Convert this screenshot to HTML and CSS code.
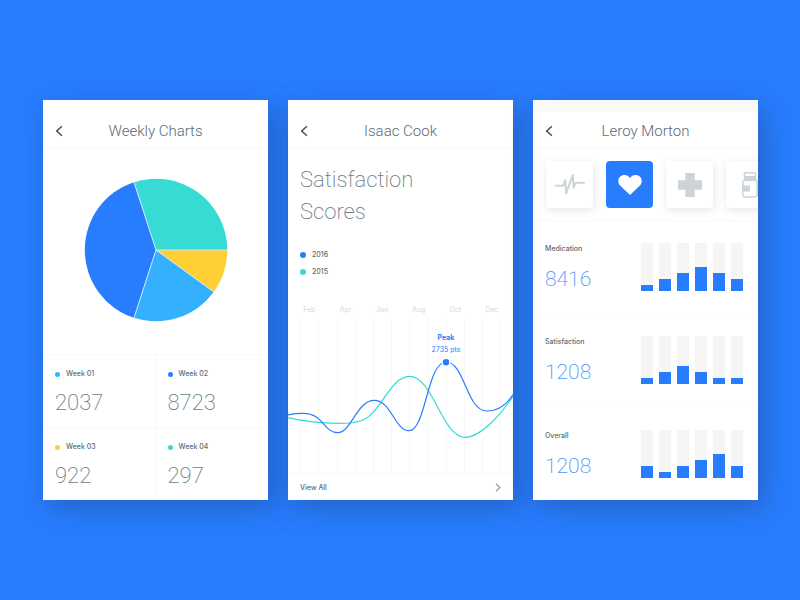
FILE: index.html
```html
<!DOCTYPE html>
<html lang="en">
<head>
<meta charset="utf-8">
<title>Health Charts</title>
<link rel="stylesheet" href="styles.css">
</head>
<body>
<main class="screens">
  <section class="card">
    <div class="status"></div>
    <header class="bar">
      <button class="back" type="button" aria-label="Back"><svg width="8" height="12" viewBox="0 0 8 12"><path d="M6.9 1.2 1.7 6l5.2 4.8"/></svg></button>
      <h1>Weekly Charts</h1>
    </header>
    <div class="pie">
      <svg viewBox="-72 -72 144 144" stroke="#d5e8f4" stroke-width="1" stroke-linejoin="round">
        <g stroke="none">
          <path fill="#38dbd4" d="M0 0-22-67.800A71.300 71.300 0 0 1 71.300 0Z"/>
          <path fill="#ffcf33" d="M0 0H71.300A71.300 71.300 0 0 1 57.700 41.900Z"/>
          <path fill="#33b1ff" d="M0 0 57.700 41.900A71.300 71.300 0 0 1-22 67.800Z"/>
          <path fill="#287dff" d="M0 0-22 67.800A71.300 71.300 0 0 1-22-67.800Z"/>
        </g>
        <path fill="none" d="M-22-67.800 0 0H71.300M57.700 41.900 0 0-22 67.800"/>
      </svg>
    </div>
    <div class="weeks">
      <div class="week"><p class="label"><i class="dot sky"></i>Week 01</p><p class="number">2037</p></div>
      <div class="week"><p class="label"><i class="dot blue"></i>Week 02</p><p class="number">8723</p></div>
      <div class="week"><p class="label"><i class="dot yellow"></i>Week 03</p><p class="number">922</p></div>
      <div class="week"><p class="label"><i class="dot teal"></i>Week 04</p><p class="number">297</p></div>
    </div>
  </section>

  <section class="card">
    <div class="status"></div>
    <header class="bar">
      <button class="back" type="button" aria-label="Back"><svg width="8" height="12" viewBox="0 0 8 12"><path d="M6.9 1.2 1.7 6l5.2 4.8"/></svg></button>
      <h1>Isaac Cook</h1>
    </header>
    <h2>Satisfaction<br>Scores</h2>
    <ul class="legend">
      <li class="label"><i class="dot blue"></i>2016</li>
      <li class="label"><i class="dot teal"></i>2015</li>
    </ul>
    <div class="months"><span>Feb</span><span>Apr</span><span>Jun</span><span>Aug</span><span>Oct</span><span>Dec</span></div>
    <svg class="chart" viewBox="0 0 225 155">
      <path class="grid" d="M12.5 0v155M30.5 0v155M49.5 0v155M67.5 0v155M85.5 0v155M103.5 0v155M121.5 0v155M140.5 0v155M158.5 0v155M176.5 0v155M194.5 0v155M212.5 0v155"/>
      <path class="line teal-line" d="M0 99.700C16 103.500 34 105.500 52 105.400C60 105.400 67 105 73 102.800C93 96 102 58.300 121.500 58.300C145 58.300 154 119.300 177 119.300C193 119.300 213 96 225 78.500"/>
      <path class="line blue-line" d="M0 96.800C5 95.600 10 95.300 15.500 95.300C35 95.300 36 114.700 49.700 114.700C63 114.700 69 82.300 86.300 82.300C103 82.300 107 112.700 121 112.700C138 112.700 139 44 158 44C177 44 178 93 199 93C209 93 218 88 225 76.500"/>
      <circle cx="158" cy="44.300" r="4.500" fill="#fff"/>
      <circle cx="158" cy="44.300" r="3.200" fill="#287dff"/>
      <text class="peak" x="158" y="22">Peak</text>
      <text class="points" x="158" y="34">2735 pts</text>
    </svg>
    <a class="all" href="#">View All<svg width="6" height="9" viewBox="0 0 6 9"><path d="M1 .8 5 4.500 1 8.200"/></svg></a>
  </section>

  <section class="card">
    <div class="status tinted"></div>
    <header class="bar">
      <button class="back" type="button" aria-label="Back"><svg width="8" height="12" viewBox="0 0 8 12"><path d="M6.9 1.2 1.7 6l5.2 4.8"/></svg></button>
      <h1>Leroy Morton</h1>
    </header>
    <div class="tiles">
      <button class="tile" type="button" aria-label="Pulse"><svg width="32" height="24" viewBox="0 0 32 24"><path fill="none" stroke="#cdd3d6" stroke-width="2" stroke-linecap="round" stroke-linejoin="round" d="M1.800 12.800H9l2.300-5.500.9 13L18.800 2l.7 12.700 2.200-4.900H30"/></svg></button>
      <button class="tile active" type="button" aria-label="Heart"><svg width="24" height="20" viewBox="0 0 24 20"><path fill="#fff" d="M12 20 2.300 10.800C-.6 7.800-.2 3.600 2.200 1.500 5-.9 9.400-.5 12 3 14.600-.5 19-.9 21.800 1.500c2.400 2.100 2.800 6.300-.1 9.300Z"/></svg></button>
      <button class="tile" type="button" aria-label="Care"><svg width="24" height="24" viewBox="0 0 24 24"><path fill="#cdd3d6" d="M7.300 0h9.400v7.300H24v9.400h-7.300V24H7.300v-7.300H0V7.300h7.300Z"/></svg></button>
      <button class="tile" type="button" aria-label="Medicine"><svg width="16" height="26" viewBox="0 0 16 26"><g fill="none" stroke="#cdd3d6" stroke-width="1.500"><rect x="2.300" y=".8" width="11.400" height="4" rx="1.500"/><path d="M3 8.200h10a2.200 2.200 0 0 1 2.200 2.200v12.400a2.200 2.200 0 0 1-2.200 2.200H3a2.200 2.200 0 0 1-2.200-2.200V10.400A2.200 2.200 0 0 1 3 8.200Z"/></g><path fill="#cdd3d6" d="M2.500 4.800h11L15 8.800H1ZM1 13.500h7v6H1Z"/></svg></button>
    </div>
    <div class="stat">
      <div><p class="label">Medication</p><p class="number">8416</p></div>
      <div class="bars"><i class="h1"></i><i class="h2"></i><i class="h3"></i><i class="h4"></i><i class="h3"></i><i class="h2"></i></div>
    </div>
    <div class="stat">
      <div><p class="label">Satisfaction</p><p class="number">1208</p></div>
      <div class="bars"><i class="h1"></i><i class="h2"></i><i class="h3"></i><i class="h2"></i><i class="h1"></i><i class="h1"></i></div>
    </div>
    <div class="stat">
      <div><p class="label">Overall</p><p class="number">1208</p></div>
      <div class="bars"><i class="h2"></i><i class="h1"></i><i class="h2"></i><i class="h3"></i><i class="h4"></i><i class="h2"></i></div>
    </div>
  </section>
</main>
</body>
</html>
```
FILE: styles.css
```css
* { box-sizing: border-box; }
body, h1, h2, p, ul { margin: 0; padding: 0; }
body {
  background: #287dff;
  color: #5b6c75;
  font-family: Roboto, "Liberation Sans", sans-serif;
}
.screens {
  display: grid;
  grid-template-columns: repeat(3, 1fr);
  gap: 20px;
  min-height: 100vh;
  padding: 100px 42px 100px 43px;
}
.card {
  display: flex;
  flex-direction: column;
  min-width: 0;
  background: #fff;
  box-shadow: 6px 8px 26px rgba(30, 50, 90, .36);
}
.status { height: 12px; flex: none; }
.tinted { background: #faf9f8; }
.bar {
  display: grid;
  grid-template-columns: 32px 1fr 32px;
  align-items: center;
  height: 37px;
  padding-top: 1px;
  flex: none;
  border-bottom: 1px solid #f7f8f8;
}
.back {
  display: flex;
  padding: 0 0 0 12px;
  border: 0;
  background: none;
}
.back svg { fill: none; stroke: #3f505a; stroke-width: 1.500; }
h1 {
  font-size: 15px;
  font-weight: 300;
  line-height: 20px;
  text-align: center;
}
h2 {
  padding: 15px 12px 0;
  color: #6d7d85;
  font-size: 22px;
  font-weight: 200;
  line-height: 32px;
}
.label {
  display: flex;
  align-items: center;
  font: 500 7px/16px Inter, sans-serif;
}
.dot { width: 5px; height: 5px; margin-right: 6px; border-radius: 50%; }
.sky { background: #33b1ff; }
.blue { background: #287dff; }
.yellow { background: #ffcf33; }
.teal { background: #38dbd4; }
.number {
  margin-top: 6px;
  color: #6d7d85;
  font-size: 22px;
  font-weight: 200;
  line-height: 32px;
}

.pie { display: flex; justify-content: center; padding: 29px 40px 0; }
.pie svg { width: 100%; max-width: 144px; }
.weeks {
  display: grid;
  grid-template-columns: 1fr 1fr;
  grid-auto-rows: 1fr;
  height: 146px;
  margin-top: auto;
}
.week { padding: 11px 12px 0; border-top: 1px solid #f7f8f8; }
.week:nth-child(odd) { border-right: 1px solid #f7f8f8; }
.week .number { margin-top: 5px; }

.legend { padding: 18px 12px 0; list-style: none; }
.legend .label { line-height: 17px; }
.legend .dot { width: 6px; height: 6px; }
.months {
  display: grid;
  grid-template-columns: repeat(6, 1fr);
  margin-top: auto;
  padding: 0 3px;
  color: #d3d8da;
  font: 400 7px/16px Inter, sans-serif;
  text-align: center;
}
.chart { display: block; width: 100%; }
.grid { stroke: #f7f8f8; }
.line { fill: none; stroke-width: 1.200; }
.teal-line { stroke: #38dbd4; }
.blue-line { stroke: #287dff; }
.peak, .points { fill: #287dff; font: 400 7px Inter, sans-serif; text-anchor: middle; }
.peak { font-weight: 700; }
.all {
  display: flex;
  align-items: center;
  justify-content: space-between;
  height: 27px;
  padding: 1px 12px 0;
  border-top: 1px solid #f7f8f8;
  color: #5b6c75;
  font: 500 7px/16px Inter, sans-serif;
  text-decoration: none;
}
.all svg { fill: none; stroke: #93a0a6; stroke-width: 1.200; }

.tiles {
  display: flex;
  gap: 13px;
  flex: none;
  padding: 12px 0 12px 13px;
  overflow: hidden;
  border-bottom: 1px solid #f7f8f8;
}
.tile {
  display: flex;
  flex: none;
  align-items: center;
  justify-content: center;
  width: 47px;
  height: 47px;
  padding: 0;
  border: 0;
  border-radius: 4px;
  background: #fff;
  box-shadow: 1px 2px 8px rgba(60, 70, 80, .14);
}
.active { background: #287dff; box-shadow: none; }
.stat {
  display: flex;
  flex: 1;
  justify-content: space-between;
  padding: 20px 15px 0 12px;
}
.stat + .stat { border-top: 1px solid #fafbfb; }
.stat .number { color: #4a91ff; font-size: 21px; }
.bars { display: flex; align-items: flex-end; gap: 6px; height: 48px; margin-top: 2px; }
.bars i {
  width: 12px;
  height: 48px;
  background: linear-gradient(#287dff, #287dff) bottom / 100% 6px no-repeat #f6f5f3;
}
.bars .h2 { background-size: 100% 12px; }
.bars .h3 { background-size: 100% 18px; }
.bars .h4 { background-size: 100% 24px; }
```
